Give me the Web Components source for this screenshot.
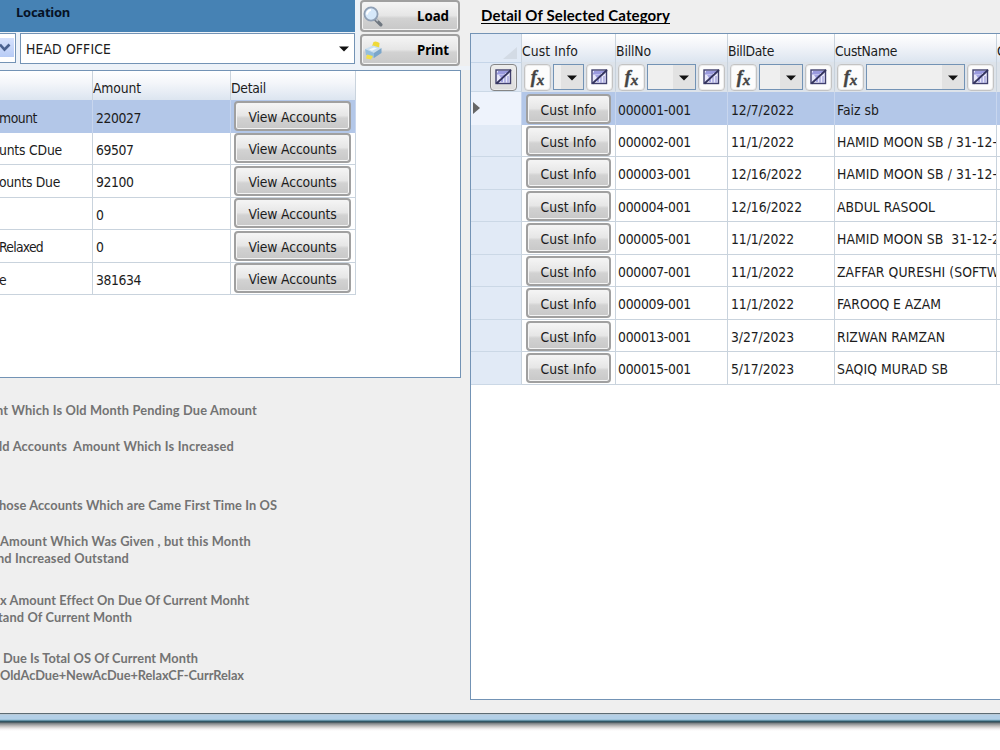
<!DOCTYPE html>
<html lang="en">
<head>
<meta charset="utf-8">
<title>Outstanding Summary</title>
<style>
    html, body { margin: 0; height: 100%; overflow: hidden; background: #fff; }
</style>
</head>
<body>
<app-window></app-window>

<script>
const base = `* { box-sizing: border-box; }`;

/** Small icons shared by the buttons and the filter row */
const icons = {
    search: `<svg width="21" height="21" viewBox="0 0 21 21">
        <path d="M12.5 13.5l5.3 5.2" stroke="#6f7780" stroke-width="3.4" stroke-linecap="round"/>
        <path d="M13 13l2 2" stroke="#b9bfc6" stroke-width="2"/>
        <circle cx="8" cy="8" r="6.6" fill="#d6e8fa" stroke="#8f9fb4" stroke-width="1.8"/>
        <path d="M4 8.5a4.2 4.2 0 0 1 4-4.4" fill="none" stroke="#fff" stroke-width="2"/>
    </svg>`,
    print: `<svg width="21" height="21" viewBox="0 0 21 21">
        <path d="M8.500 7.500l2-5.500Q13 .5 16.500 3L16 9z" fill="#efd939"/>
        <path d="M2 9l8-3.500 8 2.500-7.500 5z" fill="#c9dff0"/>
        <path d="M2 9l9 4v5L3 15z" fill="#94bedd"/>
        <path d="M11 13l7.500-5v5L11 18z" fill="#7ba6ca"/>
        <path d="M4 14.500l6 1.500-2 3.500L3 18.500z" fill="#f1df4c"/>
        <path d="M6 9.500l5-2 3 .8-5 2.400z" fill="#f4f9fd"/>
    </svg>`,
    clear: `<svg width="17" height="16" viewBox="0 0 17 16">
        <rect x="1" y="1" width="14.500" height="13.500" fill="#e7e7fa" stroke="#40406e" stroke-width="1.400"/>
        <path d="M2 4.500h8M3 3h11" stroke="#9a9ade" stroke-width="1.800"/>
        <path d="M4 6h7l-3 3v4H6V9z" fill="#a5a5e4"/>
        <path d="M10 8v6M13 7v7" stroke="#a5a5dc" stroke-width="1.400"/>
        <path d="M1.500 14.500L16 1" stroke="#33335d" stroke-width="1.800"/>
    </svg>`
};

/** Text run set to an exact advance width through letter spacing */
class FitText extends HTMLElement {
    constructor() {
        super();
        this.attachShadow({ mode: 'open' });
        this.shadowRoot.innerHTML = `<style>:host { display: inline-block; flex: none; white-space: pre; }</style><slot></slot>`;
    }

    connectedCallback() {
        const width = Number(this.getAttribute('w'));
        const natural = this.getBoundingClientRect().width;
        if (width) {
            this.style.letterSpacing = `${(width - natural) / this.textContent.length}px`;
        }
    }
}

class PushButton extends HTMLElement {
    constructor() {
        super();
        this.attachShadow({ mode: 'open' });
        this.shadowRoot.innerHTML = `
            <style>
                ${base}
                :host {
                    display: flex;
                    box-sizing: border-box;
                    align-items: center;
                    justify-content: center;
                    height: 30px;
                    padding-top: 2px;
                    border: 2px solid #a0a0a0;
                    border-radius: 4px;
                    background: linear-gradient(#f5f5f5, #e6e6e6 48%, #d2d2d2 58%, #c8c8c8);
                    box-shadow: inset 0 0 0 1px #f4f4f4;
                    color: #1c1c1c;
                }
                :host([kind="tool"]) {
                    height: 32px;
                    justify-content: space-between;
                    padding: 0 9px 0 1px;
                    font: bold 13.3px/18px "Noto Sans", sans-serif;
                    color: #000;
                }
            </style>
            ${icons[this.getAttribute('icon')] || ''}<slot></slot>
        `;
    }
}

class DropDown extends HTMLElement {
    constructor() {
        super();
        this.attachShadow({ mode: 'open' });
        this.shadowRoot.innerHTML = `
            <style>
                ${base}
                :host {
                    display: flex;
                    box-sizing: border-box;
                    align-items: center;
                    justify-content: space-between;
                    border: 1px solid #7393b5;
                    background: #fff;
                }
                .arrow {
                    align-self: stretch;
                    width: 20px;
                    display: flex;
                    align-items: center;
                    justify-content: center;
                }
                :host([small]) { flex: 1; height: 26px; background: #efefef; min-width: 0; }
                :host([small]) .arrow { width: 22px; background: #e2e2e2; padding-top: 2px; }
            </style>
            <slot></slot>
            <span></span>
            <div class="arrow"><svg width="10" height="6" viewBox="0 0 10 6"><path d="M0 .5h10L5 5.500z" fill="#111"/></svg></div>
        `;
    }
}

class ColumnFilter extends HTMLElement {
    constructor() {
        super();
        this.attachShadow({ mode: 'open' });
        const only = this.hasAttribute('clear-only');
        this.shadowRoot.innerHTML = `
            <style>
                ${base}
                :host { display: flex; flex: 1; align-items: center; gap: 2px; min-width: 0; }
                .btn {
                    flex: none;
                    width: 27px;
                    height: 27px;
                    display: flex;
                    align-items: center;
                    justify-content: center;
                    border: 1px solid #c3c3c3;
                    border-radius: 4px;
                    background: #fcfcfc;
                    box-shadow: inset 0 0 0 1px #ececec;
                }
                .dark { border-color: #858585; background: linear-gradient(#ececec, #ddd); }
                .fx { font: italic bold 18px/20px "Liberation Serif", serif; color: #444; -webkit-text-stroke: .4px #444; }
                .fx small { font-size: 15px; position: relative; top: 2px; }
            </style>
            ${only ? '' : `<div class="btn fx"><span>f<small>x</small></span></div><drop-down small></drop-down>`}
            <div class="btn ${only ? 'dark' : ''}">${icons.clear}</div>
        `;
    }
}

/** Summary by category, left pane */
class SummaryGrid extends HTMLElement {
    constructor() {
        super();
        this.attachShadow({ mode: 'open' });
        const rows = [
            ['mount', 38, '220027', 45],
            ['unts CDue', 63, '69507', 37.5],
            ['ounts Due', 61, '92100', 37.5],
            ['', 0, '0', 7.5],
            ['Relaxed', 44, '0', 7.5],
            ['e', 4, '381634', 45]
        ];
        this.shadowRoot.innerHTML = `
            <style>
                ${base}
                :host {
                    display: block;
                    box-sizing: border-box;
                    width: 461px;
                    height: 308px;
                    border: 1px solid #7393b5;
                    border-left: 0;
                    background: #fff;
                }
                .row { display: grid; grid-template-columns: 93px 138px 125px; width: 356px; height: 32.5px; }
                .row > div {
                    display: flex;
                    align-items: center;
                    border-right: 1px solid #c9d3dd;
                    border-bottom: 1px solid #c9d3dd;
                    overflow: hidden;
                    padding-top: 3px;
                }
                .row > div + div { padding-left: 3px; }
                .row > div:last-child { padding-top: 0; }
                .name { margin-left: -1px; }
                .head { height: 29px; background: linear-gradient(#fff, #f4f6fa 40%, #dce5f0); }
                .head > div, .head > div:last-child { border-bottom: 0; padding-top: 5px; }
                .head > div + div { padding-left: 0; }
                .selected { background: #b3c7e8; }
                .selected > div { border-right-color: #c8d6ee; border-bottom: 0; }
                push-button { width: 117px; }
            </style>
            <div class="row head">
                <div></div>
                <div><fit-text w="48">Amount</fit-text></div>
                <div><fit-text w="35">Detail</fit-text></div>
            </div>
            ${rows.map(([name, nameW, amount, amountW], i) => `
                <div class="row ${i === 0 ? 'selected' : ''}">
                    <div>${name ? `<fit-text class="name" w="${nameW}">${name}</fit-text>` : ''}</div>
                    <div><fit-text w="${amountW}">${amount}</fit-text></div>
                    <div><push-button><fit-text w="88">View Accounts</fit-text></push-button></div>
                </div>
            `).join('')}
        `;
    }
}

/** Bills of the selected category, right pane */
class DetailGrid extends HTMLElement {
    constructor() {
        super();
        this.attachShadow({ mode: 'open' });
        const rows = [
            ['000001-001', '12/7/2022', 63, 'Faiz sb', 42],
            ['000002-001', '11/1/2022', 63, 'HAMID MOON SB / 31-12-', 160],
            ['000003-001', '12/16/2022', 71, 'HAMID MOON SB / 31-12-', 160],
            ['000004-001', '12/16/2022', 71, 'ABDUL RASOOL', 98],
            ['000005-001', '11/1/2022', 63, 'HAMID MOON SB  31-12-2', 163],
            ['000007-001', '11/1/2022', 63, 'ZAFFAR QURESHI (SOFTW', 162],
            ['000009-001', '11/1/2022', 63, 'FAROOQ E AZAM', 104],
            ['000013-001', '3/27/2023', 63, 'RIZWAN RAMZAN', 108],
            ['000015-001', '5/17/2023', 63, 'SAQIQ MURAD SB', 111]
        ];
        this.shadowRoot.innerHTML = `
            <style>
                ${base}
                :host {
                    display: block;
                    box-sizing: border-box;
                    height: 667px;
                    border: 1px solid #7393b5;
                    border-right: 0;
                    background: #fff;
                    overflow: hidden;
                }
                .row { display: grid; grid-template-columns: 51px 94px 112px 107px 162px 40px; height: 32.5px; }
                .row > div {
                    display: flex;
                    align-items: center;
                    border-right: 1px solid #c9d3dd;
                    border-bottom: 1px solid #c9d3dd;
                    padding: 3px 0 0 2px;
                    overflow: hidden;
                }
                .row > div:first-child { background: #e1eaf6; border-bottom-color: #cbd8e6; padding: 0; }
                .row > div:nth-child(2) { padding: 1px 0 0 4px; }
                .row > div:nth-child(4) { padding-left: 3px; }
                .head { height: 28px; background: linear-gradient(#fff, #f3f5f9 40%, #dce5f0); }
                .head > div, .head > div:nth-child(n+2) { border-bottom: 0; padding: 6px 0 0; }
                .head > div:first-child { align-items: flex-end; justify-content: flex-end; padding: 0 4px 3px; }
                .filter { height: 30px; background: #dde3ea; }
                .filter > div, .filter > div:nth-child(n+2) { padding: 1px 2px 0 2px; border-bottom-color: #dde3ea; }
                .filter > div:first-child { padding-left: 19px; border-top: 1px solid #c5d5e8; }
                .selected { background: #b3c7e8; }
                .selected > div { border-color: #c8d6ee; border-bottom: 0; }
                .selected > div:first-child { background: #eef3fc; padding-left: 2px; }
                push-button { width: 85px; }
            </style>
            <div class="row head">
                <div><svg width="14" height="12"><path d="M14 0v12H0z" fill="#d3dbe5"/></svg></div>
                <div><fit-text w="56">Cust Info</fit-text></div>
                <div><fit-text w="35">BillNo</fit-text></div>
                <div><fit-text w="46">BillDate</fit-text></div>
                <div><fit-text w="62">CustName</fit-text></div>
                <div>C</div>
            </div>
            <div class="row filter">
                <div><column-filter clear-only></column-filter></div>
                <div><column-filter></column-filter></div>
                <div><column-filter></column-filter></div>
                <div><column-filter></column-filter></div>
                <div><column-filter></column-filter></div>
                <div></div>
            </div>
            ${rows.map(([bill, date, dateW, name, nameW], i) => `
                <div class="row ${i === 0 ? 'selected' : ''}">
                    <div>${i === 0 ? '<svg width="7" height="12"><path d="M0 0l7 6-7 6z" fill="#666"/></svg>' : ''}</div>
                    <div><push-button><fit-text w="56">Cust Info</fit-text></push-button></div>
                    <div><fit-text w="73">${bill}</fit-text></div>
                    <div><fit-text w="${dateW}">${date}</fit-text></div>
                    <div><fit-text w="${nameW}">${name}</fit-text></div>
                    <div></div>
                </div>
            `).join('')}
        `;
    }
}

/** Notes explaining each category */
class NoteList extends HTMLElement {
    constructor() {
        super();
        this.attachShadow({ mode: 'open' });
        // text, left offset, width, space above
        const notes = [
            ['nt Which Is Old Month Pending Due Amount', -4, 261, 0],
            ['ld Accounts  Amount Which Is Increased', -1, 235, 19],
            ['hose Accounts Which are Came First Time In OS', -1, 278, 42],
            ['Amount Which Was Given , but this Month', 0, 251, 19],
            ['nd Increased Outstand', -3, 132, 0],
            ['x Amount Effect On Due Of Current Monht', 0, 249, 25],
            ['tand Of Current Month', -2, 134, 0],
            ['Due Is Total OS Of Current Month', 3, 195, 24],
            ['OldAcDue+NewAcDue+RelaxCF-CurrRelax', 0, 244, 0]
        ];
        this.shadowRoot.innerHTML = `
            <style>
                :host {
                    display: block;
                    padding-top: 24px;
                    font: bold 12.8px/17px Lato, "Liberation Sans", sans-serif;
                    color: #737373;
                }
                div { height: 17px; }
            </style>
            ${notes.map(([text, left, width, gap]) => `
                <div style="margin: ${gap}px 0 0 ${left}px"><fit-text w="${width}">${text}</fit-text></div>
            `).join('')}
        `;
    }
}

class AppWindow extends HTMLElement {
    constructor() {
        super();
        this.attachShadow({ mode: 'open' });
        this.shadowRoot.innerHTML = `
            <style>
                ${base}
                :host {
                    display: block;
                    width: 1000px;
                    font: 13.8px/18px "DejaVu Sans Condensed", "Noto Sans", sans-serif;
                    color: #1c1c1c;
                    overflow: hidden;
                }
                .client { display: flex; height: 713px; background: #efefef; overflow: hidden; }
                .left { width: 470px; flex: none; }
                .right { flex: 1; min-width: 0; }
                .top { display: flex; gap: 5px; height: 70px; background: #edf2f8; }
                .filters { width: 355px; }
                .caption {
                    height: 32px;
                    padding: 3px 0 0 16px;
                    background: #4682b4;
                    font: bold 13px/18px "Noto Sans", sans-serif;
                    color: #061226;
                }
                .combos { display: flex; gap: 4px; padding-top: 1px; }
                .combos drop-down { width: 335px; height: 31px; padding-left: 5px; }
                .picker {
                    width: 16px;
                    height: 30px;
                    border: 1px solid #7393b5;
                    border-left: 0;
                    background: #fff;
                    padding: 4px 1px 5px 0;
                }
                .picker svg { display: block; background: linear-gradient(#d6e2fd, #b8ccf6); }
                .tools { flex: 1; display: flex; flex-direction: column; gap: 2px; background: #efefef; margin-bottom: 4px; padding-right: 10px; }
                h1 {
                    margin: 0;
                    height: 33px;
                    padding: 5px 0 0 11px;
                    font: bold 15px/20px Lato, "Liberation Sans", sans-serif;
                    color: #000;
                }
                h1 fit-text { text-decoration: underline; text-underline-offset: 2px; text-decoration-skip-ink: none; }
                .frame {
                    height: 37px;
                    background: linear-gradient(#5c6b73 0 1px, #b9c9d6 1px 2px, #b3cfe6 2px 6px, #8fb9d0 7px, #376878 8px,
                        #2c444e 9px, #747b7d 10px, #a9a9a9 12px, #d5d1cf 14px, #f4f2f1 16px, #fff 18px);
                }
            </style>
            <div class="client">
                <div class="left">
                    <div class="top">
                        <div class="filters">
                            <div class="caption"><fit-text w="54">Location</fit-text></div>
                            <div class="combos">
                                <div class="picker"><svg width="14" height="19" viewBox="0 0 14 19"><path d="M0 6.500l4.500 5 5-5" fill="none" stroke="#49618f" stroke-width="2.600"/></svg></div>
                                <drop-down><fit-text w="85">HEAD OFFICE</fit-text></drop-down>
                            </div>
                        </div>
                        <div class="tools">
                            <push-button kind="tool" icon="search"><fit-text w="32">Load</fit-text></push-button>
                            <push-button kind="tool" icon="print"><fit-text w="32">Print</fit-text></push-button>
                        </div>
                    </div>
                    <summary-grid></summary-grid>
                    <note-list></note-list>
                </div>
                <div class="right">
                    <h1><fit-text w="189">Detail Of Selected Category</fit-text></h1>
                    <detail-grid></detail-grid>
                </div>
            </div>
            <div class="frame"></div>
        `;
    }
}

customElements.define('app-window', AppWindow);
customElements.define('summary-grid', SummaryGrid);
customElements.define('detail-grid', DetailGrid);
customElements.define('note-list', NoteList);
customElements.define('column-filter', ColumnFilter);
customElements.define('drop-down', DropDown);
customElements.define('push-button', PushButton);
// last, so that every container is laid out before a text is measured
customElements.define('fit-text', FitText);
</script>
</body>
</html>
